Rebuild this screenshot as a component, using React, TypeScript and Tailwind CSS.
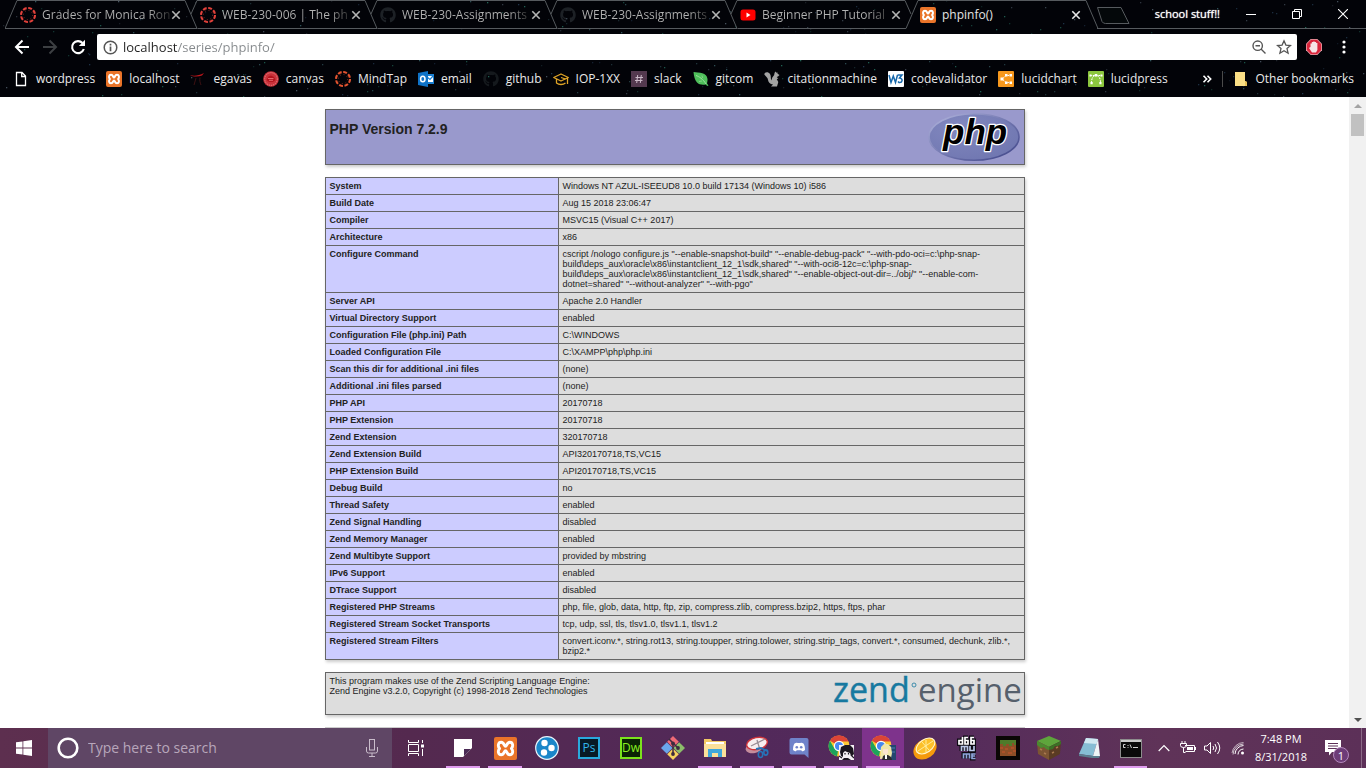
import React from "react";
import { FaGithub } from "react-icons/fa";

const UI_FONT = "font-['Open_Sans','Noto_Sans',sans-serif]";

/* ---------- small icons ---------- */

function CanvasRing({ color = "#e0403a" }: { color?: string }) {
  return (
    <svg viewBox="0 0 16 16" className="size-4 shrink-0">
      <circle cx="8" cy="8" r="7" fill="none" stroke={color} strokeWidth="2.1" strokeDasharray="3.9 1.6" />
      <circle cx="8" cy="8" r="4.6" fill="none" stroke={color} strokeWidth="0.9" strokeDasharray="1 2.61" opacity="0.6" />
    </svg>
  );
}

function XamppIcon({ className = "size-4" }: { className?: string }) {
  return (
    <span className={`${className} flex shrink-0 items-center justify-center rounded-xs bg-[#ea7429]`}>
      <svg viewBox="0 0 24 24" className="size-full">
        <path
          d="M12 9.800C10.500 9.800 10.800 5.500 7.500 5.500C4.200 5.500 3.700 9.500 5.800 12C3.700 14.500 4.200 18.500 7.500 18.500C10.800 18.500 10.500 14.200 12 14.200C13.500 14.200 13.200 18.500 16.500 18.500C19.800 18.500 20.300 14.500 18.200 12C20.300 9.500 19.800 5.500 16.500 5.500C13.200 5.500 13.500 9.800 12 9.800Z"
          fill="none"
          stroke="#fff"
          strokeWidth="3"
          strokeLinejoin="round"
        />
      </svg>
    </span>
  );
}

function YoutubeIcon() {
  return (
    <svg viewBox="0 0 16 16" className="size-4 shrink-0">
      <rect x="0.500" y="2.500" width="15" height="11" rx="2.500" fill="#f00" />
      <path d="M6.500 5.500v5l4-2.500z" fill="#fff" />
    </svg>
  );
}

function PageIcon() {
  return (
    <svg viewBox="0 0 16 16" className="size-4 shrink-0" fill="none" stroke="#fff" strokeWidth="1.300">
      <path d="M3.500 1.500h5.500l3.500 3.500v9.500h-9zM8.700 1.700v3.800h3.800" />
    </svg>
  );
}

function EgavasIcon() {
  return (
    <svg viewBox="0 0 16 16" className="size-4 shrink-0">
      <path d="M0 4c4 1.500 9 .5 14-2l-2 2.500C8 6 3 6 0 4z" fill="#c5171c" />
      <path d="M6 7L4 14M10 6.500c-.5 3 0 5 1 7.500" stroke="#3d1012" strokeWidth="1" fill="none" />
    </svg>
  );
}

function CanvasSeal() {
  return (
    <svg viewBox="0 0 16 16" className="size-4 shrink-0">
      <circle cx="8" cy="8" r="7.800" fill="#c9323a" />
      <circle cx="8" cy="8" r="6.300" fill="none" stroke="#e5868a" strokeWidth="1" strokeDasharray="1.300 0.800" />
      <path d="M3.500 9l2-3.500L8 4.500l3 1.500 1.500 3L10 11H6z" fill="#b3141d" />
      <path d="M5 7.500h5.500M6 9.300h4" stroke="#f07a7e" strokeWidth="0.800" />
    </svg>
  );
}

function OutlookIcon() {
  return (
    <svg viewBox="0 0 16 16" className="size-4 shrink-0">
      <path d="M8 3h8v10H8z" fill="#1b7fd0" />
      <path d="M9 5h6v6H9z" fill="#fff" />
      <path d="M9 6l3 2.500L15 5" stroke="#1b7fd0" strokeWidth="1.200" fill="none" />
      <path d="M0 2l10-2v16L0 14z" fill="#0f73c8" />
      <ellipse cx="4.800" cy="8" rx="2.200" ry="2.800" fill="none" stroke="#fff" strokeWidth="1.500" />
    </svg>
  );
}

function GradCap() {
  return (
    <svg viewBox="0 0 16 16" className="size-4 shrink-0" fill="none" stroke="#e0a526" strokeWidth="1.300" strokeLinejoin="round">
      <path d="M.7 6.500L8 3l7.300 3.500L8 10z" />
      <path d="M3.500 8v4c2.500 2 6.500 2 9 0M14.500 7v6M8 6.500l4.500 1.500" />
    </svg>
  );
}

function SlackIcon() {
  return (
    <svg viewBox="0 0 16 16" className="size-4 shrink-0">
      <rect width="16" height="16" fill="#54394f" />
      <path d="M6.700 4l-1 8M10.300 4l-1 8M4.500 6.500h7.500M4 9.500h7.500" stroke="#cbb9c8" strokeWidth="1" />
    </svg>
  );
}

function LeafIcon() {
  return (
    <svg viewBox="0 0 16 16" className="size-4 shrink-0">
      <path d="M.5 1C6 1.500 14 1.500 14.500 8c.2 2-.5 3.500-.5 4.500l1.500 2-1.300.5-1.400-1.500C7 14.500 1.500 13 .5 1z" fill="#4fbf5b" />
      <path d="M3 4.500c3 1 7 3.500 10 8.500" stroke="#a5e3a6" strokeWidth="0.900" fill="none" />
      <path d="M6 10.500l3-.5M9 4.500l.5 2.500" stroke="#a5e3a6" strokeWidth="0.600" fill="none" />
    </svg>
  );
}

function SquirrelIcon() {
  return (
    <svg viewBox="0 0 16 16" className="size-4 shrink-0" fill="#a3a3a3">
      <path d="M.3 3.500C.5.500 4.500.500 6 3c1.200 2 .5 4 1.300 6.500l1-3L10.200 4c0-1.500.6-3 1.300-3.500l.8 1.200 1-.4.3 1.400L15.500 4l-1.500 1.500-1.300.5 1.600 1.500-1.600.5 1.600 3-1.300 4.500H7l2-2c-3-.5-4.500-2-5-4.500-.3-1.500-.5-2-1.500-3z" />
    </svg>
  );
}

function W3Icon() {
  return (
    <svg viewBox="0 0 16 16" className="size-4 shrink-0">
      <rect width="16" height="16" rx="1" fill="#fff" />
      <path d="M1 4l2 7.500L5.300 5l2.200 6.500L9.500 4M9.500 4H14l-2.500 3c4 .5 3 5-.5 4.500l-1-1" stroke="#1768ac" strokeWidth="1.500" fill="none" />
    </svg>
  );
}

function LucidchartIcon() {
  return (
    <svg viewBox="0 0 16 16" className="size-4 shrink-0">
      <rect width="16" height="16" rx="1" fill="#f7981d" />
      <path d="M11 4.500H8L4 8l4 3.500h3" stroke="#fff" strokeWidth="1" strokeDasharray="1.500 1" fill="none" />
      <path d="M2.500 6.500h3v3h-3zM7 3h2.500v2.500H7zM7 10.500h2.500V13H7zM11.500 3H14v2.500h-2.500zM11.500 10.500H14V13h-2.500z" fill="#fff" />
    </svg>
  );
}

function LucidpressIcon() {
  return (
    <svg viewBox="0 0 16 16" className="size-4 shrink-0">
      <rect width="16" height="16" rx="1" fill="#8cc63e" />
      <path d="M3.500 12C3.500 7 5 4.500 8 4.500s4.500 2.500 4.500 7.500M2 4.500h12" stroke="#fff" strokeWidth="1" strokeDasharray="1.800 1" fill="none" />
      <path d="M6.700 3h2.600v2.600H6.700zM1.500 3.500h2v2h-2zM12.500 3.500h2v2h-2zM2.500 11h2.200v2.200H2.500zM11.300 11h2.200v2.200h-2.200z" fill="#fff" />
    </svg>
  );
}

function FolderNote() {
  return (
    <svg viewBox="0 0 16 16" className="size-4 shrink-0">
      <path d="M2 1h10v9l2 1v4H2z" fill="#fbdf86" />
      <path d="M12 10l2 1v4h-2z" fill="#e8c054" />
    </svg>
  );
}

/* ---------- browser frame ---------- */

const STARS = Array.from({ length: 380 }, (_, i) => {
  const r = (n: number) => {
    const v = Math.sin(i * 12.9898 + n * 78.233) * 43758.5453;
    return v - Math.floor(v);
  };
  return {
    x: Math.round(r(1) * 1366),
    y: Math.round(r(2) * 96),
    o: 0.2 + r(3) * 0.5,
    c: ["#4c7f86", "#31506e", "#2f8f78", "#6b7c8c"][Math.floor(r(4) * 4)],
  };
});

function Starfield() {
  return (
    <svg viewBox="0 0 1366 97" preserveAspectRatio="xMidYMid slice" className="absolute inset-0 size-full">
      {STARS.map((s, i) => (
        <rect key={i} x={s.x} y={s.y} width="1.300" height="1.300" fill={s.c} opacity={s.o} />
      ))}
    </svg>
  );
}

function CloseX({ active = false }: { active?: boolean }) {
  return (
    <svg viewBox="0 0 10 10" className="size-[10px]">
      <path d="M1.300 1.300l7.400 7.400M8.700 1.300L1.300 8.700" stroke={active ? "#e8e8e8" : "#b5b5b5"} strokeWidth="1.600" />
    </svg>
  );
}

type Tab = { title: string; icon: React.ReactNode; active?: boolean; outline: string };

const FIRST = "M0 28.500L12 .500H180L192 28.500H0";
const MIDDLE = "M6 14L12 .500H180L192 28.500H12.500";
const LAST = "M6 14L12 .500H180L186 14M12.500 28.500H181";
const ACTIVE = "M1 28.500L13 .500H181L193 28.500";

const TABS: Tab[] = [
  { title: "Grades for Monica Ron", icon: <CanvasRing />, outline: FIRST },
  { title: "WEB-230-006 | The ph", icon: <CanvasRing />, outline: MIDDLE },
  { title: "WEB-230-Assignments", icon: <FaGithub className="size-4 shrink-0 text-[#1d2126]" />, outline: MIDDLE },
  { title: "WEB-230-Assignments", icon: <FaGithub className="size-4 shrink-0 text-[#1d2126]" />, outline: MIDDLE },
  { title: "Beginner PHP Tutorial", icon: <YoutubeIcon />, outline: LAST },
  { title: "phpinfo()", icon: <XamppIcon />, active: true, outline: ACTIVE },
];

function TabStrip() {
  return (
    <div className="relative flex h-[30px] pl-[5px]">
      {TABS.map((t, i) => (
        <div key={i} className="relative flex h-[30px] w-[180px] shrink-0 items-center pr-1 pl-[15px]">
          <svg viewBox="0 0 194 30" className="pointer-events-none absolute top-0 left-0 h-[30px] w-[194px]" fill="none" stroke="#565a5e">
            <path d={t.outline} />
          </svg>
          {t.icon}
          <a
            href="#"
            className={`ml-1.5 min-w-0 flex-1 text-xs whitespace-nowrap ${
              t.active ? "text-[#e4e4e4]" : "bg-[linear-gradient(to_right,#b2b2b2_106px,#333_126px)] bg-clip-text text-transparent"
            }`}
          >
            {t.title}
          </a>
          <button aria-label="Close tab">
            <CloseX active={t.active} />
          </button>
        </div>
      ))}
      <div className="relative h-[30px] flex-1">
        <div className="absolute inset-x-0 top-7 ml-3 h-px bg-[#565a5e]" />
        <button aria-label="New tab" className="absolute top-[6px] left-[10px]">
          <svg viewBox="0 0 36 19" className="h-[19px] w-9" fill="#04080a" stroke="#565a5e">
            <path d="M2.500 1.500H26L34 17.500H10.500Q8 17.500 7 15.500Z" />
          </svg>
        </button>
      </div>
      <div className="absolute top-0 right-0 flex h-7 items-center">
        <span className="pr-2 text-[11px] text-white [text-shadow:0_0_1px_#fff]">school stuff!!</span>
        <button aria-label="Minimize" className="flex h-7 w-[46px] items-center justify-center">
          <svg viewBox="0 0 10 10" className="size-[10px]"><path d="M0 5.500h10" stroke="#fff" /></svg>
        </button>
        <button aria-label="Restore" className="flex h-7 w-[46px] items-center justify-center">
          <svg viewBox="0 0 10 10" className="size-[10px]" fill="none" stroke="#fff"><path d="M.5 2.500h7v7h-7zM2.500 2.500v-2h7v7h-2" /></svg>
        </button>
        <button aria-label="Close" className="flex h-7 w-[46px] items-center justify-center">
          <svg viewBox="0 0 10 10" className="size-[10px]"><path d="M0 0l10 10M10 0L0 10" stroke="#fff" strokeWidth="1.100" /></svg>
        </button>
      </div>
    </div>
  );
}

function Toolbar() {
  return (
    <div className="relative mt-1 flex h-[26px] items-center">
      <div className="flex w-[97px] shrink-0 items-center gap-3 pl-[14px]">
        <button aria-label="Back">
          <svg viewBox="0 0 16 16" className="size-4" fill="none" stroke="#fff" strokeWidth="2"><path d="M15 8H2M8.500 1.500L2 8l6.500 6.500" /></svg>
        </button>
        <button aria-label="Forward">
          <svg viewBox="0 0 16 16" className="size-4" fill="none" stroke="#3c3f42" strokeWidth="2"><path d="M1 8h13M7.500 1.500L14 8l-6.500 6.500" /></svg>
        </button>
        <button aria-label="Reload">
          <svg viewBox="0 0 16 16" className="size-4"><path d="M13.800 10A6 6 0 1 1 12.500 4" fill="none" stroke="#fff" strokeWidth="2.100" /><path d="M15 .8V7H8.800z" fill="#fff" /></svg>
        </button>
      </div>
      <div className="flex h-[26px] flex-1 items-center rounded-xs bg-white pl-1.5 pr-[5px]">
        <svg viewBox="0 0 16 16" className="size-[15px] shrink-0" fill="none" stroke="#555" strokeWidth="1.600">
          <circle cx="8" cy="8" r="6.700" />
          <path d="M8 7v5M8 4v1.800" strokeWidth="1.800" />
        </svg>
        <input
          aria-label="Address"
          defaultValue="localhost/series/phpinfo/"
          className="ml-[5px] h-[22px] min-w-0 flex-1 bg-[linear-gradient(to_right,#222_55px,#85898c_55px)] bg-clip-text text-[13px] text-transparent outline-none"
        />
        <button aria-label="Zoom">
          <svg viewBox="0 0 16 16" className="size-4" fill="none" stroke="#555" strokeWidth="1.400"><circle cx="6.700" cy="6.700" r="4.700" /><path d="M10 10l4.500 4.500M4.500 6.700H9" /></svg>
        </button>
        <button aria-label="Bookmark this page" className="ml-[9px]">
          <svg viewBox="0 0 16 16" className="size-4" fill="none" stroke="#555" strokeWidth="1.300"><path d="M8 1.800l1.900 4.300 4.600.4-3.500 3.100 1.100 4.600L8 11.800l-4.100 2.400L5 9.600 1.500 6.500l4.600-.4z" /></svg>
        </button>
      </div>
      <div className="flex w-[69px] shrink-0 items-center pl-[9px]">
        <button aria-label="Ad blocker">
          <svg viewBox="0 0 16 16" className="size-4">
            <path d="M4.700 0h6.600L16 4.700v6.600L11.300 16H4.700L0 11.300V4.700z" fill="#e6a3ab" />
            <path d="M5 .8h6L15.200 5v6L11 15.200H5L.8 11V5z" fill="#d8243a" />
            <path d="M4.500 8V4.500h1.300V3h1.400v-.500h1.500V3h1.400v1h1.300v7L10 13.500H6L3 9l1-.700z" fill="#f6e4e6" />
          </svg>
        </button>
        <button aria-label="Menu" className="ml-[14px]">
          <svg viewBox="0 0 16 16" className="size-4" fill="#fff"><circle cx="8" cy="3" r="1.600" /><circle cx="8" cy="8" r="1.600" /><circle cx="8" cy="13" r="1.600" /></svg>
        </button>
      </div>
    </div>
  );
}

const BOOKMARKS: { label: string; icon: React.ReactNode }[] = [
  { label: "wordpress", icon: <PageIcon /> },
  { label: "localhost", icon: <XamppIcon /> },
  { label: "egavas", icon: <EgavasIcon /> },
  { label: "canvas", icon: <CanvasSeal /> },
  { label: "MindTap", icon: <CanvasRing color="#e2532f" /> },
  { label: "email", icon: <OutlookIcon /> },
  { label: "github", icon: <FaGithub className="size-4 shrink-0 text-[#15191d]" /> },
  { label: "IOP-1XX", icon: <GradCap /> },
  { label: "slack", icon: <SlackIcon /> },
  { label: "gitcom", icon: <LeafIcon /> },
  { label: "citationmachine", icon: <SquirrelIcon /> },
  { label: "codevalidator", icon: <W3Icon /> },
  { label: "lucidchart", icon: <LucidchartIcon /> },
  { label: "lucidpress", icon: <LucidpressIcon /> },
];

function BookmarksBar() {
  return (
    <nav className="relative flex h-[37px] items-center pl-[13px] text-xs text-[#e9e9e9]">
      <div className="flex gap-[11px]">
        {BOOKMARKS.map((b) => (
          <a key={b.label} href="#" className="flex items-center gap-[7px]">
            {b.icon}
            <span>{b.label}</span>
          </a>
        ))}
      </div>
      <div className="ml-auto flex items-center pr-3">
        <button aria-label="More bookmarks">
          <svg viewBox="0 0 10 10" className="size-[10px]" fill="none" stroke="#fff" strokeWidth="1.600"><path d="M1.500 1.800L4.700 5 1.500 8.200M5.500 1.800L8.700 5 5.500 8.200" /></svg>
        </button>
        <span className="mr-2.5 ml-2.5 h-4 w-px bg-[#4b4b4b]" />
        <a href="#" className="flex items-center gap-1.5">
          <FolderNote />
          <span>Other bookmarks</span>
        </a>
      </div>
    </nav>
  );
}

/* ---------- page ---------- */

const INFO: [string, string][] = [
  ["System", "Windows NT AZUL-ISEEUD8 10.0 build 17134 (Windows 10) i586"],
  ["Build Date", "Aug 15 2018 23:06:47"],
  ["Compiler", "MSVC15 (Visual C++ 2017)"],
  ["Architecture", "x86"],
  [
    "Configure Command",
    'cscript /nologo configure.js "--enable-snapshot-build" "--enable-debug-pack" "--with-pdo-oci=c:\\php-snap-build\\deps_aux\\oracle\\x86\\instantclient_12_1\\sdk,shared" "--with-oci8-12c=c:\\php-snap-build\\deps_aux\\oracle\\x86\\instantclient_12_1\\sdk,shared" "--enable-object-out-dir=../obj/" "--enable-com-dotnet=shared" "--without-analyzer" "--with-pgo"',
  ],
  ["Server API", "Apache 2.0 Handler"],
  ["Virtual Directory Support", "enabled"],
  ["Configuration File (php.ini) Path", "C:\\WINDOWS"],
  ["Loaded Configuration File", "C:\\XAMPP\\php\\php.ini"],
  ["Scan this dir for additional .ini files", "(none)"],
  ["Additional .ini files parsed", "(none)"],
  ["PHP API", "20170718"],
  ["PHP Extension", "20170718"],
  ["Zend Extension", "320170718"],
  ["Zend Extension Build", "API320170718,TS,VC15"],
  ["PHP Extension Build", "API20170718,TS,VC15"],
  ["Debug Build", "no"],
  ["Thread Safety", "enabled"],
  ["Zend Signal Handling", "disabled"],
  ["Zend Memory Manager", "enabled"],
  ["Zend Multibyte Support", "provided by mbstring"],
  ["IPv6 Support", "enabled"],
  ["DTrace Support", "disabled"],
  ["Registered PHP Streams", "php, file, glob, data, http, ftp, zip, compress.zlib, compress.bzip2, https, ftps, phar"],
  ["Registered Stream Socket Transports", "tcp, udp, ssl, tls, tlsv1.0, tlsv1.1, tlsv1.2"],
  [
    "Registered Stream Filters",
    "convert.iconv.*, string.rot13, string.toupper, string.tolower, string.strip_tags, convert.*, consumed, dechunk, zlib.*, bzip2.*",
  ],
];

function PhpLogo() {
  return (
    <svg viewBox="0 0 92 50" className="h-[50px] w-[92px]" role="img" aria-label="PHP logo">
      <defs>
        <radialGradient id="phpFill" cx="0.35" cy="0.3" r="0.8">
          <stop offset="0" stopColor="#8288bf" />
          <stop offset="1" stopColor="#6f76b0" />
        </radialGradient>
        <linearGradient id="phpEdge" x1="0" y1="0" x2="1" y2="1">
          <stop offset="0" stopColor="#b6b9e0" />
          <stop offset="0.5" stopColor="#7378b0" />
          <stop offset="1" stopColor="#3c4286" />
        </linearGradient>
      </defs>
      <ellipse cx="46" cy="25" rx="45" ry="23.300" fill="url(#phpFill)" stroke="url(#phpEdge)" strokeWidth="1.600" />
      <text x="15" y="32" fontSize="35" fontWeight="700" fontStyle="italic" fontFamily="Liberation Sans, sans-serif" fill="#000" stroke="#fff" strokeWidth="2.600" strokeLinejoin="round" paintOrder="stroke">
        php
      </text>
    </svg>
  );
}

function ZendLogo() {
  return (
    <svg viewBox="0 0 192 40" className="h-10 w-[192px]" role="img" aria-label="Zend engine logo" fontFamily="Open Sans, sans-serif">
      <text x="3" y="29" fontSize="34" fill="#1779a0" stroke="#1779a0" strokeWidth="0.400">zend</text>
      <circle cx="84" cy="12" r="2" fill="none" stroke="#1779a0" strokeWidth="0.800" />
      <text x="88" y="29" fontSize="33" fill="#56606c">engine</text>
    </svg>
  );
}

function PhpInfo() {
  return (
    <main className="flex min-h-0 flex-1 bg-white">
      <div className="min-w-0 flex-1 overflow-hidden pt-3 font-['Liberation_Sans',Arial,sans-serif] text-[9px] leading-[10px] text-[#222]">
        <div className="mx-auto flex w-[700px] flex-col gap-3">
          <header className="flex h-14 justify-between border border-[#666] bg-[#9999cc] px-1 shadow-[1px_2px_3px_#ccc]">
            <h1 className="pt-[11px] text-[14px] leading-4 font-bold">PHP Version 7.2.9</h1>
            <div className="pt-[2px]">
              <PhpLogo />
            </div>
          </header>
          <table className="w-full table-fixed border-collapse shadow-[1px_2px_3px_#ccc]">
            <colgroup>
              <col className="w-1/3" />
              <col />
            </colgroup>
            <tbody>
              {INFO.map(([k, v]) => (
                <tr key={k}>
                  <th scope="row" className="border border-[#666] bg-[#ccccff] px-1 py-[3px] text-left align-top font-bold">
                    {k}
                  </th>
                  <td className="border border-[#666] bg-[#dddddd] px-1 py-[3px] align-top break-words">{v}</td>
                </tr>
              ))}
            </tbody>
          </table>
          <section className="flex h-[43px] justify-between border border-[#666] bg-[#dddddd] pr-[2px] pl-1 shadow-[1px_2px_3px_#ccc]">
            <p className="pt-[3px]">
              This program makes use of the Zend Scripting Language Engine:
              <br />
              Zend Engine v3.2.0, Copyright (c) 1998-2018 Zend Technologies
            </p>
            <ZendLogo />
          </section>
          <hr className="h-px border-0 bg-[#ccc]" />
        </div>
      </div>
      <div className="flex w-[17px] shrink-0 flex-col items-center bg-[#f1f1f1]">
        <span className="flex h-[17px] items-center">
          <svg viewBox="0 0 8 4" className="h-1 w-2" fill="#a3a3a3"><path d="M4 0l4 4H0z" /></svg>
        </span>
        <span className="h-[22px] w-[13px] bg-[#c1c1c1]" />
        <span className="mt-auto flex h-[17px] items-center">
          <svg viewBox="0 0 8 4" className="h-1 w-2" fill="#505050"><path d="M4 4l4-4H0z" /></svg>
        </span>
      </div>
    </main>
  );
}

/* ---------- task bar ---------- */

function Chrome({ blond = false }: { blond?: boolean }) {
  return (
    <svg viewBox="0 0 26 26" className="size-[26px]">
      <circle cx="11" cy="11" r="10.500" fill="#fcc934" />
      <path d="M11 11L1.900 5.800A10.500 10.500 0 0 1 20.500 6.500H11z" fill="#db4437" />
      <path d="M11 11l-2 10.300A10.500 10.500 0 0 1 1.900 5.800l4.600 8z" fill="#1da35c" />
      <circle cx="11" cy="11" r="5.200" fill="#fff" />
      <circle cx="11" cy="11" r="4" fill="#4688f1" />
      {blond ? (
        <g>
          <path d="M19 10h7v15h-7z" fill="#23466f" />
          <path d="M20 13h5M20 17h5" stroke="#4e7fb4" />
          <path d="M10 24l1-12 3-3 4 0 3 3 1 6-1 5z" fill="#f0e6a8" />
          <path d="M13 14h5v4l-2 2-3-2z" fill="#fbe3cf" />
          <path d="M12 25l1-4 2-1h3l3 2 1 3z" fill="#2d2b2f" />
          <path d="M15 20h2v4h-2z" fill="#fff" />
        </g>
      ) : (
        <g>
          <rect x="11" y="10" width="15" height="15" fill="#f3eff3" />
          <path d="M12 17l1-5 4-2h5l3 3 1 6-2 2-1 0-1-3-3-1-2-1-2 2v4l-2-1z" fill="#1b161f" />
          <path d="M11 21l3 2M23 20l3 3M17 18v1.500M20.500 18v1.500" stroke="#1b161f" strokeWidth="1.200" />
          <path d="M14 25l2-2h4l3 2z" fill="#1b161f" />
        </g>
      )}
    </svg>
  );
}

const APPS: { name: string; icon: React.ReactNode; open?: boolean; active?: boolean }[] = [
  {
    name: "Sticky Notes",
    open: true,
    icon: <svg viewBox="0 0 18 18" className="size-[18px]"><path d="M0 0h18v9l-9 9H0z" fill="#fff" /><path d="M10 17V10h7z" fill="#4a2a55" /></svg>,
  },
  { name: "XAMPP", open: true, icon: <XamppIcon className="size-[23px]" /> },
  {
    name: "Player",
    icon: (
      <svg viewBox="0 0 24 24" className="size-6">
        <circle cx="12" cy="12" r="11.300" fill="#1a86c9" stroke="#e9f4fb" strokeWidth="1.200" />
        <circle cx="9.500" cy="7" r="3.200" fill="#fff" /><circle cx="16.500" cy="12" r="3.200" fill="#fff" /><circle cx="9" cy="16.500" r="3.200" fill="#fff" />
      </svg>
    ),
  },
  {
    name: "Photoshop",
    icon: <span className="flex size-[22px] items-center justify-center border-2 border-[#29a9dd] bg-[#081a26] text-xs text-[#31b4e8]">Ps</span>,
  },
  {
    name: "Dreamweaver",
    icon: <span className="flex size-[22px] items-center justify-center border-2 border-[#7be31c] bg-[#0b2405] text-xs text-[#8af020]">Dw</span>,
  },
  {
    name: "Git",
    icon: (
      <svg viewBox="0 0 24 24" className="size-6">
        <path d="M12 0l5.800 5.800L12 11.600 6.200 5.800z" fill="#ef6a76" />
        <path d="M18.200 6.200L24 12l-5.800 5.800L12.400 12z" fill="#8cbd6a" />
        <path d="M5.800 6.200L11.600 12l-5.800 5.800L0 12z" fill="#6aa5ea" />
        <path d="M12 12.400l5.800 5.800L12 24l-5.800-5.800z" fill="#f6d25e" />
        <path d="M8 3l9 9M12 7v12" stroke="#3d2b3f" strokeWidth="1.500" />
        <circle cx="12" cy="7.500" r="1.900" fill="#3d2b3f" /><circle cx="17" cy="12" r="1.900" fill="#3d2b3f" /><circle cx="12" cy="18" r="1.900" fill="#3d2b3f" />
      </svg>
    ),
  },
  {
    name: "File Explorer",
    open: true,
    icon: (
      <svg viewBox="0 0 24 24" className="size-6">
        <path d="M1 3h7l1 2h14v15H1z" fill="#f2c864" /><path d="M3 6h18v3H3z" fill="#fff" /><path d="M1 8h22v13H1z" fill="#fbe09a" />
        <path d="M5 13h14v8h-4v-4H9v4H5z" fill="#3fa7dc" />
      </svg>
    ),
  },
  {
    name: "Snipping Tool",
    open: true,
    icon: (
      <svg viewBox="0 0 24 24" className="size-6">
        <ellipse cx="9" cy="12" rx="8.500" ry="5" transform="rotate(-12 9 12)" fill="#c58d9c" />
        <ellipse cx="12" cy="7.500" rx="10.500" ry="6" transform="rotate(-12 12 7.500)" fill="#f7eef0" stroke="#d0353b" strokeWidth="1.400" />
        <path d="M6 10l14-7M12 4l3 10" stroke="#9a8d96" strokeWidth="1.300" />
        <path d="M11 13l5-1 6 3" stroke="#2773b8" strokeWidth="1.800" fill="none" />
        <ellipse cx="15.500" cy="18.500" rx="2.200" ry="3" fill="none" stroke="#2773b8" strokeWidth="1.600" /><ellipse cx="20.800" cy="16.500" rx="2" ry="2.600" fill="none" stroke="#2773b8" strokeWidth="1.600" />
      </svg>
    ),
  },
  {
    name: "Discord",
    open: true,
    icon: (
      <svg viewBox="0 0 20 22" className="h-[22px] w-5">
        <path d="M2.500 1h15A2 2 0 0 1 19.500 3v18l-4-3.500h-13A2 2 0 0 1 .5 15.500V3a2 2 0 0 1 2-2z" fill="#6f83ca" />
        <path d="M4 13c0-3 .5-5 1.500-6.500C7 5.500 8 5.500 8.500 6h3c.5-.5 1.500-.5 3 .5C15.500 8 16 10 16 13c-1 1-2 1.200-3 1.200l-.7-1H7.700l-.7 1C6 14.200 5 14 4 13z" fill="#fff" />
        <circle cx="7.800" cy="10.300" r="1.300" fill="#6f83ca" /><circle cx="12.200" cy="10.300" r="1.300" fill="#6f83ca" />
      </svg>
    ),
  },
  { name: "Chrome profile 1", open: true, icon: <Chrome /> },
  { name: "Chrome profile 2", open: true, active: true, icon: <Chrome blond /> },
  {
    name: "Lemon",
    icon: (
      <svg viewBox="0 0 24 24" className="size-6">
        <ellipse cx="12" cy="13" rx="12.500" ry="9.500" transform="rotate(-35 12 13)" fill="#f59a0c" />
        <ellipse cx="12.500" cy="10" rx="11" ry="7" transform="rotate(-35 12.500 10)" fill="#fff6cf" />
        <ellipse cx="12.500" cy="10" rx="9.800" ry="5.900" transform="rotate(-35 12.500 10)" fill="#fcc02a" />
        <path d="M5 15L20 5M9 6l7 8M13 4v12" stroke="#fff0a8" strokeWidth="0.900" />
      </svg>
    ),
  },
];

const D66_TOP = "M4.500 1v7H1V4.500h3.500M10 1.500H7V8h3V4.500H7M16 1.500h-3V8h3V4.500h-3";
const D66_MID = "M3.500 15v-4.500h6V15M6.500 10.500V15M12 10v4.500h4V10";
const D66_LOW = "M5.500 22.500V18h6v4.500M8.500 18v4.500M17.500 18H14v4.500h3.500M14 20h3";

const GAMES: { name: string; icon: React.ReactNode; open?: boolean }[] = [
  {
    name: "d66mume",
    icon: (
      <svg viewBox="0 0 18 24" className="h-6 w-[18px] overflow-visible" fill="none" strokeWidth="1.700">
        <path d={D66_TOP + D66_MID + D66_LOW} stroke="#0d0a12" strokeWidth="4" />
        <path d={D66_TOP} stroke="#fff" />
        <path d={D66_MID} stroke="#b9c6e8" />
        <path d={D66_LOW} stroke="#8ea6dc" />
      </svg>
    ),
  },
  {
    name: "Terrain",
    icon: (
      <svg viewBox="0 0 24 24" className="size-6">
        <rect width="24" height="24" fill="#0a0705" />
        <rect x="4" y="4" width="16" height="16" fill="#8d4f27" />
        <path d="M4 4h16v5h-2V7h-2v3h-3V8h-3v2H7V8H4z" fill="#4f7b2a" />
        <path d="M4 12h3M9 13h3M15 12h3M6 16h3M12 17h4M17 15h3" stroke="#b5532b" strokeWidth="1.500" />
      </svg>
    ),
  },
  {
    name: "Minecraft",
    icon: (
      <svg viewBox="0 0 24 24" className="size-6">
        <path d="M12 0l12 5-12 6L0 5z" fill="#5ea53c" /><path d="M0 5l12 6v13L1 18z" fill="#7c5433" /><path d="M24 5l-12 6v13l11-6z" fill="#5a3b23" />
        <path d="M0 5l12 6v3l-3-1-2-2-3 1-4-3z" fill="#4a8a2f" /><path d="M24 5l-12 6v3l4-1 2-3 3 0 3-2z" fill="#3b7025" />
        <path d="M3 13l2 1M7 17l2 1M15 17l2-1M19 12l2-1" stroke="#a9794f" strokeWidth="1.500" />
      </svg>
    ),
  },
  {
    name: "Notebook",
    icon: (
      <svg viewBox="0 0 24 24" className="size-6">
        <path d="M8 2l12 1-5 17-14-2z" fill="#86bdd4" /><path d="M8 2l12 1-1.500 5L6 7z" fill="#cfe8f1" /><path d="M20 3l2 17-7 0z" fill="#eef4f6" /><path d="M1 18l14 2 7 0-1 2-7 0-13-2z" fill="#5a7d8e" />
      </svg>
    ),
  },
  {
    name: "Command Prompt",
    open: true,
    icon: (
      <svg viewBox="0 0 22 19" className="h-[19px] w-[22px]">
        <rect x=".5" y=".5" width="21" height="18" fill="#0a0a0a" stroke="#8d8d8d" /><path d="M1 1h20v2H1z" fill="#c9c9c9" />
        <path d="M5.500 5.500H3.500v3h2M8 6v1M8 8v.8M10 5.500l1.500 3.500M13 8.500h5" stroke="#e4e4e4" strokeWidth=".9" fill="none" />
      </svg>
    ),
  },
];

function Taskbar() {
  return (
    <footer className="flex h-10 shrink-0 items-stretch bg-[linear-gradient(to_right,#5d2f4f,#54294f_30%,#52295a_55%,#532a5c_66%,#5f3358_85%,#5c3058)] text-white">
      <button aria-label="Start" className="flex w-12 items-center justify-center">
        <svg viewBox="0 0 16 16" className="size-4" fill="#fff"><path d="M0 2.300L6.500 1.400V7.600H0zM7.300 1.300L16 0v7.600H7.300zM0 8.400h6.500v6.200L0 13.700zM7.300 8.400H16V16l-8.700-1.300z" /></svg>
      </button>
      <label className="flex w-[344px] items-center bg-[#5f4665] pl-[9px]">
        <svg viewBox="0 0 22 22" className="size-[22px]"><circle cx="11" cy="11" r="9.300" fill="none" stroke="#fff" strokeWidth="2.600" /></svg>
        <input aria-label="Search" placeholder="Type here to search" className="ml-[9px] min-w-0 flex-1 bg-transparent text-sm outline-none placeholder:text-[#b8a6bb]" />
        <svg viewBox="0 0 12 18" className="mr-[14px] h-[18px] w-3" fill="none" stroke="#c9bccb"><rect x="3.500" y=".5" width="5" height="10.500" /><path d="M.5 8v4q0 2 2 2h7q2 0 2-2V8M6 14v3M3 17.500h6" /></svg>
      </label>
      <button aria-label="Task View" className="flex w-[50px] items-center pl-4">
        <svg viewBox="0 0 16 16" className="size-4" fill="none" stroke="#fff"><path d="M.5 4.500h10v7H.5zM.5 0v2.500h10V0M.5 16v-2.500h10V16M14.500 0v3M14.500 9v7" /><path d="M13 4.500h3v3h-3z" fill="#fff" stroke="none" /></svg>
      </button>
      {APPS.map((a) => (
        <button key={a.name} aria-label={a.name} className={`relative flex w-[42px] items-center justify-center ${a.active ? "bg-[#7e338c]" : ""}`}>
          {a.icon}
          {a.open && <span className="absolute inset-x-1 bottom-0 h-[2px] bg-[#df9cee]" />}
        </button>
      ))}
      {GAMES.map((a) => (
        <button key={a.name} aria-label={a.name} className="relative flex w-[41px] items-center justify-center">
          {a.icon}
          {a.open && <span className="absolute inset-x-1 bottom-0 h-[2px] bg-[#df9cee]" />}
        </button>
      ))}
      <div className="ml-auto flex items-center">
        <svg viewBox="0 0 12 8" className="h-2 w-3" fill="none" stroke="#fff" strokeWidth="1.200"><path d="M.7 7L6 1.500 11.300 7" /></svg>
        <svg viewBox="0 0 16 14" className="ml-2.5 h-[14px] w-4" fill="none" stroke="#fff"><path d="M5 4.500h9.500v6h-9M2 0v2M5 0v2M.5 2.500h6v2q0 2-3 2-3 0-3-2zM3.500 6.500v5h2" /><path d="M7 6h6v3H7zM15 6h1v3h-1z" fill="#fff" stroke="none" /></svg>
        <svg viewBox="0 0 17 14" className="ml-2 h-[14px] w-[17px]" fill="none" stroke="#fff"><path d="M.5 5h2.500l3.500-3.500v11L3 9H.5zM9 5q1.500 2 0 4M11 3q3 4 0 8M13.500 1q4.500 6 0 12" /></svg>
        <svg viewBox="0 0 14 14" className="ml-2.5 h-[14px] w-[14px]" fill="none" stroke="#fff"><path d="M1 12A12 12 0 0 1 12.500 1.500" opacity=".6" /><path d="M4 13A9 9 0 0 1 12.500 4.500M7 13.500A6 6 0 0 1 12.500 8" /><path d="M2 13.500A11 11 0 0 1 12.500 3" opacity=".7" /><circle cx="11.500" cy="12" r="1.500" fill="#fff" stroke="none" /></svg>
        <div className="ml-2 w-[56px] text-center text-[11px] leading-[18px] whitespace-nowrap">
          <div>7:48 PM</div>
          <div>8/31/2018</div>
        </div>
        <button aria-label="Notifications" className="relative ml-4 flex h-10 w-7 items-center">
          <svg viewBox="0 0 16 16" className="size-4"><path d="M0 0h16v12H7l-3 3.500V12H0z" fill="#fff" /><path d="M3 3.500h10M3 6h10M3 8.500h10" stroke="#5c3058" /></svg>
          <span className="absolute top-[19px] left-2 flex size-4 items-center justify-center rounded-full border border-[#b489bd] bg-[#6d3c78] text-[11px] leading-none">1</span>
        </button>
        <span className="mr-1 ml-2 h-10 w-px bg-[#8a6a86]" />
      </div>
    </footer>
  );
}

export default function App() {
  return (
    <div className={`flex h-screen flex-col overflow-hidden ${UI_FONT}`}>
      <div className="relative shrink-0 overflow-hidden bg-[#020308]">
        <Starfield />
        <TabStrip />
        <Toolbar />
        <BookmarksBar />
      </div>
      <PhpInfo />
      <Taskbar />
    </div>
  );
}
